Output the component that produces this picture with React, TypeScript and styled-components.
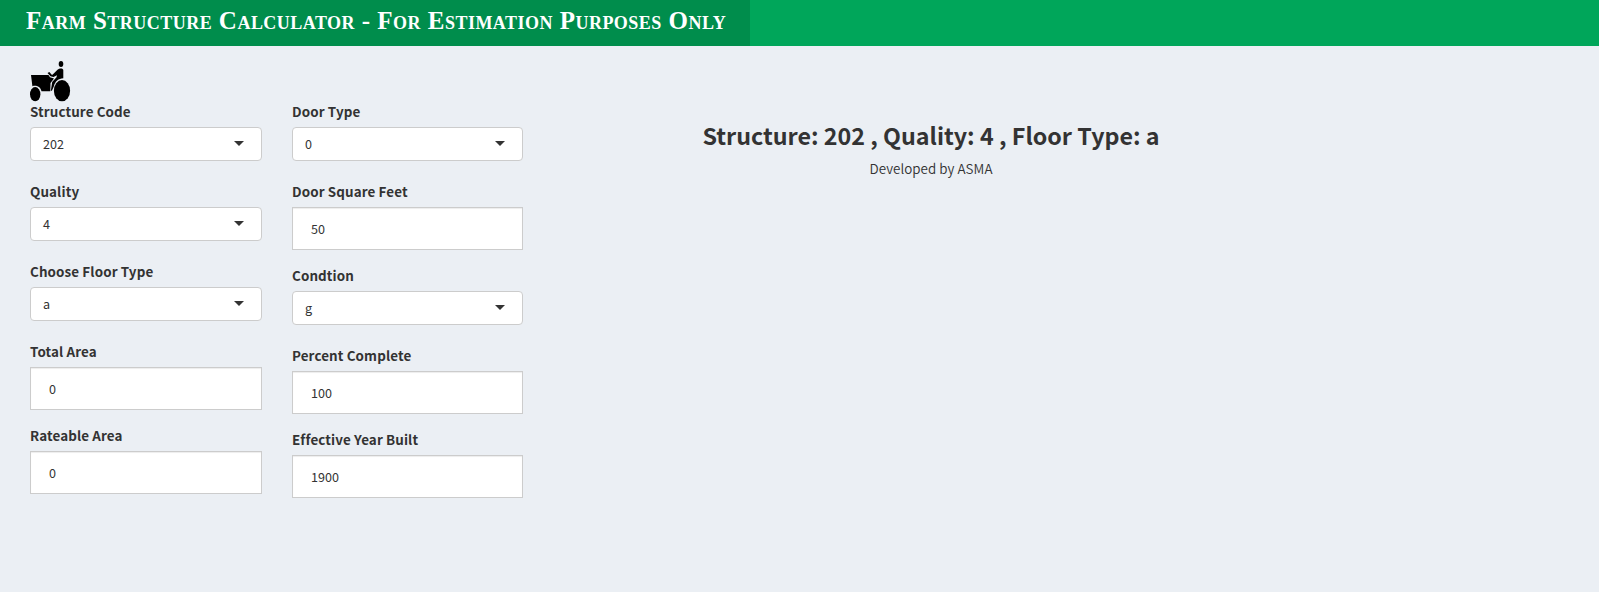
import React from "react";
import styled, { createGlobalStyle } from "styled-components";

const Global = createGlobalStyle`
  * { box-sizing: border-box; }
  body {
    margin: 0;
    min-height: 100vh;
    background: #ebeff4;
    color: #333;
    font-family: "Noto Sans CJK SC", "Noto Sans", sans-serif;
    font-size: 12.6px;
    line-height: 20px;
  }
`;

const Header = styled.header`
  height: 46px;
  background: #00a65a;
`;

const Brand = styled.div`
  width: 750px;
  height: 46px;
  padding-left: 26px;
  background: #008d4c;
  color: #fff;
  font: bold 25px/42px "Liberation Serif", serif;
  font-variant: small-caps;
  letter-spacing: 0.48px;
  white-space: nowrap;
`;

const Content = styled.main`
  display: flex;
  padding: 15px 30px 0;
`;

const Inputs = styled.section`
  width: 493px;
`;

const Tractor = styled.svg`
  display: block;
  width: 41px;
  height: 41px;
`;

const Columns = styled.div`
  display: grid;
  grid-template-columns: 232px 231px;
  gap: 30px;
`;

const Group = styled.div<{ $select?: boolean }>`
  height: ${(p) => (p.$select ? 80 : 84)}px;
`;

const Label = styled.label`
  display: block;
  height: 25px;
  font-size: 13.4px;
  line-height: 18px;
  font-weight: bold;
  letter-spacing: 0.12px;
`;

const Select = styled.button`
  display: flex;
  align-items: center;
  justify-content: space-between;
  width: 100%;
  height: 34px;
  padding: 0 17px 0 12px;
  border: 1px solid #ccc;
  border-radius: 4px;
  background: #fff;
  color: #333;
  font: inherit;
`;

const Caret = styled.span`
  margin-bottom: 2px;
  border: 5px solid transparent;
  border-top-color: #333;
  border-bottom: 0;
`;

const Input = styled.input`
  display: block;
  width: 100%;
  height: 43px;
  padding: 0 18px;
  border: 1px solid #ccc;
  background: #fff;
  box-shadow: inset 0 1px 1px rgba(0, 0, 0, 0.075);
  color: #333;
  font: inherit;
`;

const Result = styled.section`
  width: 760px;
  margin-left: 28px;
  padding-top: 58px;
  text-align: center;
`;

const Title = styled.h1`
  margin: 0;
  font-size: 23.27px;
  line-height: 32px;
`;

const Credit = styled.p`
  margin: 7px 0 0;
  font-size: 13.4px;
  font-weight: 350;
  letter-spacing: 0.05px;
`;

type Field = { label: string; value: string; select?: boolean };

const left: Field[] = [
  { label: "Structure Code", value: "202", select: true },
  { label: "Quality", value: "4", select: true },
  { label: "Choose Floor Type", value: "a", select: true },
  { label: "Total Area", value: "0" },
  { label: "Rateable Area", value: "0" },
];

const right: Field[] = [
  { label: "Door Type", value: "0", select: true },
  { label: "Door Square Feet", value: "50" },
  { label: "Condtion", value: "g", select: true },
  { label: "Percent Complete", value: "100" },
  { label: "Effective Year Built", value: "1900" },
];

function Fields({ items }: { items: Field[] }) {
  return (
    <div>
      {items.map((f) => (
        <Group key={f.label} $select={f.select}>
          <Label>{f.label}</Label>
          {f.select ? (
            <Select type="button">
              {f.value}
              <Caret />
            </Select>
          ) : (
            <Input defaultValue={f.value} />
          )}
        </Group>
      ))}
    </div>
  );
}

export default function App() {
  return (
    <>
      <Global />
      <Header>
        <Brand>Farm Structure Calculator - For Estimation Purposes Only</Brand>
      </Header>
      <Content>
        <Inputs>
          <Tractor viewBox="0 0 41 41" fill="#000">
            <ellipse cx="31" cy="3" rx="2.3" ry="3" />
            <path d="M1 14H18.5L20 16.2L24 17.5L20.5 22L20.3 30.3H11.5C10.5 25.5 6 24 2.4 25.2Z" />
            <path d="M17.5 12L19.3 11L22 14L23.5 12.8L27.5 8.8C29.5 6.8 33.3 7 33.3 9.2V17.3C28.5 17.5 25 20.5 24 25L22 29.5L20.8 30L22.2 21L26.5 16.2L27 14.2L23.5 16L20.5 15.2Z" />
            <ellipse cx="5.2" cy="33.2" rx="5.2" ry="7.1" />
            <ellipse cx="32" cy="29.7" rx="8.1" ry="10.6" />
          </Tractor>
          <Columns>
            <Fields items={left} />
            <Fields items={right} />
          </Columns>
        </Inputs>
        <Result>
          <Title>Structure: 202 , Quality: 4 , Floor Type: a</Title>
          <Credit>Developed by ASMA</Credit>
        </Result>
      </Content>
    </>
  );
}
